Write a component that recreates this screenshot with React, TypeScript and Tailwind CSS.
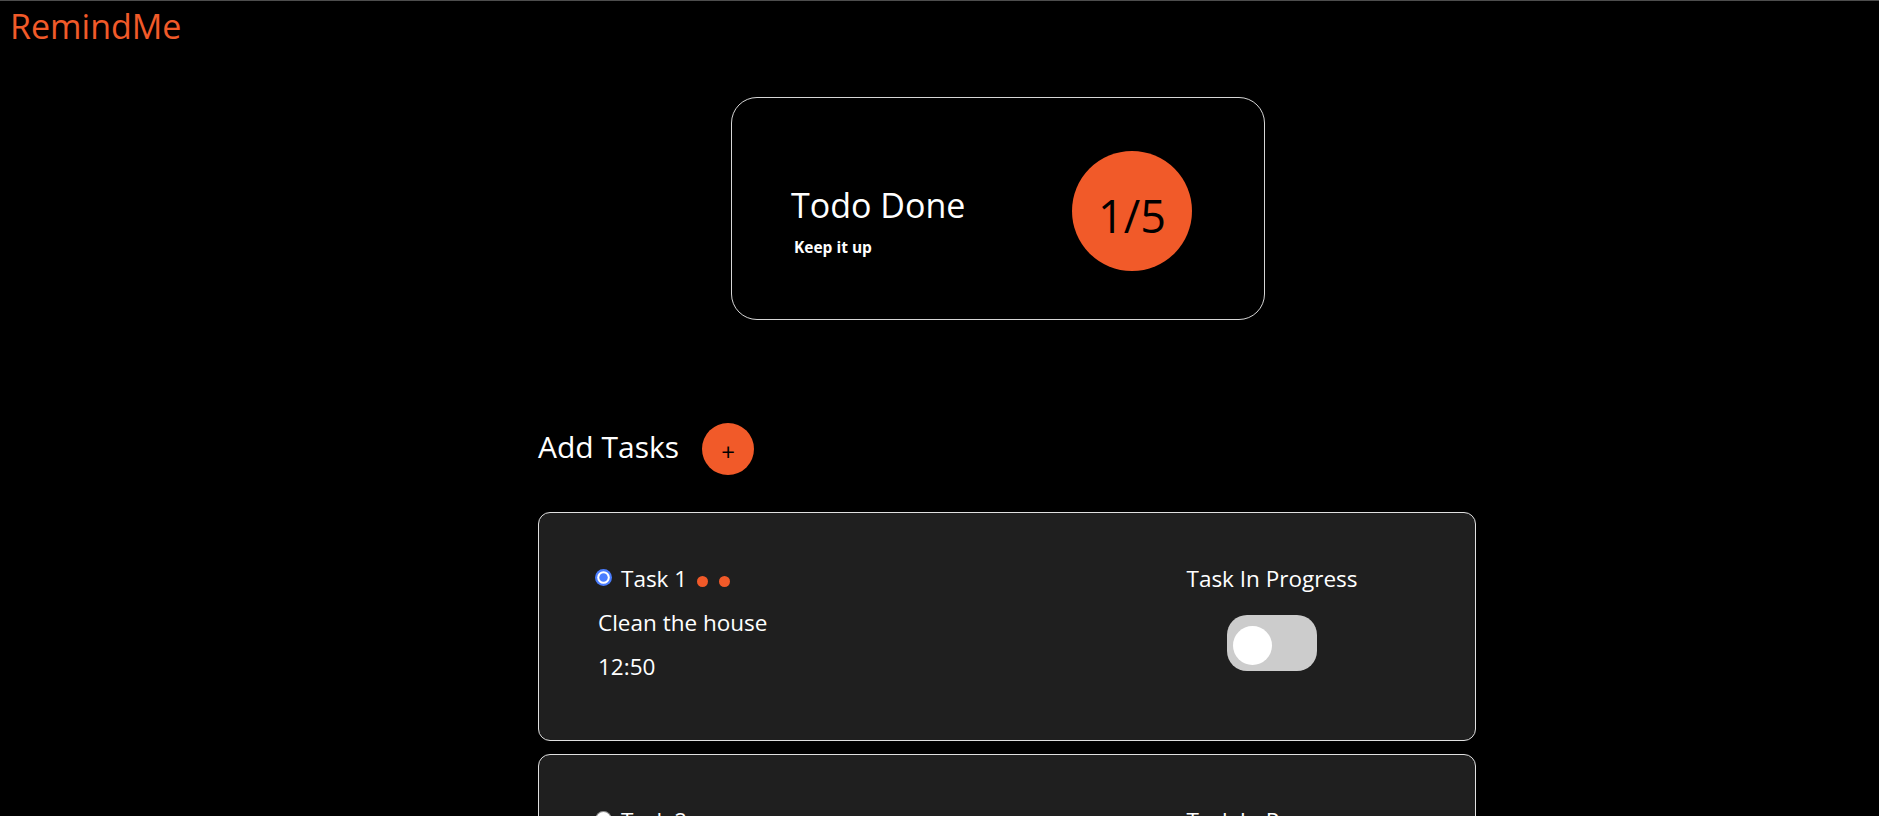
import React from "react";

// ─── Data ─────────────────────────────────────────────────────────────────────
const TASKS = [
  { id: 1, title: "Task 1", text: "Clean the house", time: "12:50", active: true, dots: 2 },
  { id: 2, title: "Task 2", text: "Buy groceries", time: "15:30", active: false, dots: 0 },
  { id: 3, title: "Task 3", text: "Walk the dog", time: "18:00", active: false, dots: 0 },
];

function Radio({ active }: { active: boolean }) {
  return (
    <svg width="17" height="17" viewBox="0 0 16 16" className="mb-[3px] mr-[9px] -ml-[2px] shrink-0">
      {active ? (
        <>
          <circle cx="8" cy="8" r="8" fill="#4a7dff" />
          <circle cx="8" cy="8" r="5.9" fill="#ffffff" />
          <circle cx="8" cy="8" r="4" fill="#4a7dff" />
        </>
      ) : (
        <circle cx="8" cy="8" r="7.5" fill="#ffffff" stroke="#8a8a8a" strokeWidth="1" />
      )}
    </svg>
  );
}

function Toggle() {
  return (
    <div className="mt-[14px] w-[90px] h-[56px] rounded-[20px] bg-[#cccccc] flex items-center pl-[6px] pt-[5px]">
      <div className="w-[39px] h-[39px] rounded-full bg-white" />
    </div>
  );
}

function TaskCard({ task }: { task: (typeof TASKS)[number] }) {
  return (
    <div className="flex border border-[#e0e0e0] rounded-[12px] bg-[#1f1f1f] pl-[58px] pt-[44px] pb-[51px] text-white text-[22.5px] leading-[44px]">
      {/* Left */}
      <div className="flex flex-col">
        <div className="flex items-center h-[44px]">
          <Radio active={task.active} />
          <span>{task.title}</span>
          {task.dots > 0 && (
            <span className="flex gap-[11px] ml-[10px] mt-[4px]">
              {Array.from({ length: task.dots }).map((_, i) => (
                <span key={i} className="w-[11px] h-[11px] rounded-full bg-[#f15a29]" />
              ))}
            </span>
          )}
        </div>
        <div className="pl-[1px]">{task.text}</div>
        <div className="pl-[1px]">{task.time}</div>
      </div>

      {/* Right */}
      <div className="ml-auto mr-[103px] w-[200px] flex flex-col items-center">
        <div className="h-[44px]">Task In Progress</div>
        <Toggle />
      </div>
    </div>
  );
}

export default function App() {
  return (
    <div className="min-h-screen bg-black border-t border-[#4d4d4d] font-['Open_Sans',sans-serif] pb-10">
      {/* Header */}
      <div className="pl-[10px] pt-[5px] text-[34px] leading-[40px] text-[#f15a29]">RemindMe</div>

      <main className="ml-[538px] w-[938px]">
        {/* Summary card */}
        <div className="mt-[51px] ml-[193px] w-[534px] h-[223px] border border-[#d6d6d6] rounded-[26px] flex items-start">
          <div className="pl-[59px] mt-[87px] flex flex-col text-white">
            <div className="text-[34px] leading-[40px]">Todo Done</div>
            <div className="mt-[12px] ml-[3px] text-[15.5px] leading-[20px] font-bold">Keep it up</div>
          </div>
          <div className="ml-auto mr-[72px] mt-[53px] w-[120px] h-[120px] rounded-full bg-[#f15a29] flex items-center justify-center pt-[9px] text-black text-[45px]">
            1/5
          </div>
        </div>

        {/* Add tasks */}
        <div className="mt-[103px] flex items-start gap-[23px] h-[52px]">
          <div className="text-white text-[30px] leading-[48px]">Add Tasks</div>
          <button className="w-[52px] h-[52px] rounded-full bg-[#f15a29] text-black text-[24px] leading-none flex items-center justify-center pt-[5px]">
            +
          </button>
        </div>

        {/* Tasks */}
        <div className="mt-[37px] flex flex-col gap-[13px]">
          {TASKS.map((t) => (
            <TaskCard key={t.id} task={t} />
          ))}
        </div>
      </main>
    </div>
  );
}
